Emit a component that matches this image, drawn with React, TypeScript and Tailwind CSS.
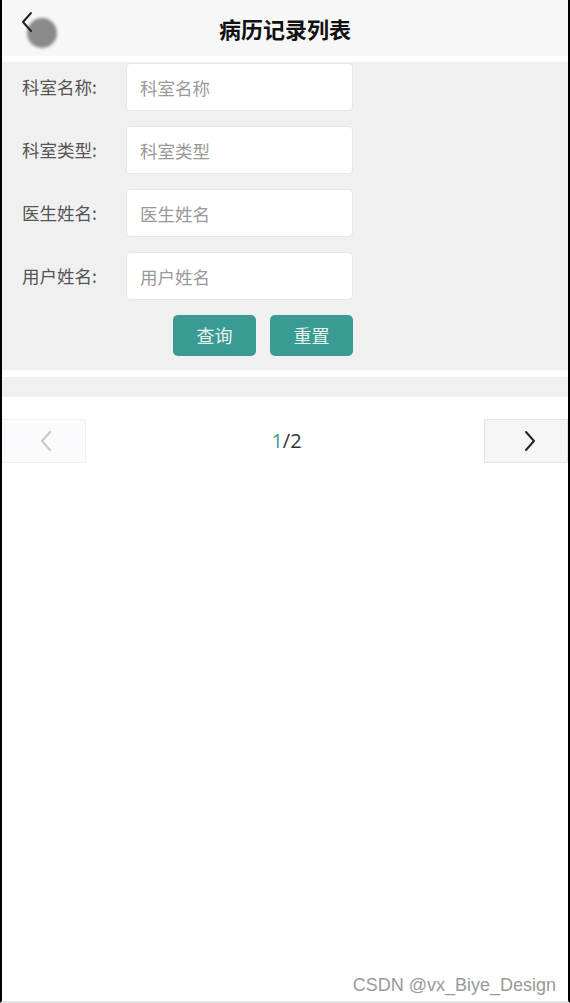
import { useState } from 'react';

const fields = [
  { label: '科室名称:', placeholder: '科室名称' },
  { label: '科室类型:', placeholder: '科室类型' },
  { label: '医生姓名:', placeholder: '医生姓名' },
  { label: '用户姓名:', placeholder: '用户姓名' },
];

function Chevron({ dir, className }: { dir: 'left' | 'right'; className?: string }) {
  return (
    <svg width="14" height="22" viewBox="0 0 14 22" fill="none" className={className}>
      <path
        d={dir === 'left' ? 'M11 2 L3 11 L11 20' : 'M3 2 L11 11 L3 20'}
        stroke="currentColor"
        strokeWidth="2"
        strokeLinecap="round"
        strokeLinejoin="round"
      />
    </svg>
  );
}

export default function App() {
  const [values, setValues] = useState<string[]>(['', '', '', '']);

  return (
    <div
      className="flex h-[1003px] w-[570px] flex-col overflow-hidden border-x-2 border-b-2 border-x-black border-b-[#e4e4e4] bg-white"
      style={{ fontFamily: '"Noto Sans CJK SC", "Noto Sans", sans-serif' }}
    >
      <header className="relative flex h-[56px] shrink-0 items-center justify-center bg-[#f7f7f7]">
        <button className="absolute left-[16px] top-[8px] h-[44px] w-[44px]">
          <span className="absolute left-[9px] top-[10px] h-[30px] w-[30px] rounded-full bg-[#8a8a8a] blur-[1.5px]" />
          <Chevron dir="left" className="absolute left-[2px] top-[3px] text-[#222]" />
        </button>
        <h1 className="text-[22px] font-bold text-[#111]">病历记录列表</h1>
      </header>

      <section className="mt-[6px] flex flex-col gap-[15px] bg-[#f0f0f0] pt-[1px] pb-[14px]">
        {fields.map((f, i) => (
          <div key={f.label} className="flex items-center">
            <label className="w-[124px] pl-[20px] text-[17.5px] text-[#555]">{f.label}</label>
            <input
              value={values[i]}
              onChange={(e) => setValues(values.map((v, j) => (j === i ? e.target.value : v)))}
              placeholder={f.placeholder}
              className="h-[48px] w-[227px] rounded-[4px] border border-[#e6e6e6] bg-white px-[13px] text-[17.5px] text-[#333] outline-none placeholder:text-[#999]"
            />
          </div>
        ))}
        <div className="flex gap-[14px] pl-[171px]">
          <button className="h-[41px] w-[83px] rounded-[5px] bg-[#3a9a94] text-[18px] text-[#e8f2ee]">查询</button>
          <button className="h-[41px] w-[83px] rounded-[5px] bg-[#3a9a94] text-[18px] text-[#e8f2ee]">重置</button>
        </div>
      </section>

      <div className="mt-[7px] h-[20px] shrink-0 bg-[#f0f0f0]" />

      <nav className="mt-[22px] flex h-[44px] items-center justify-between">
        <button className="-ml-[2px] flex h-[44px] w-[86px] items-center justify-center border border-[#f0f0f0] bg-[#fbfafc] text-[#c8c8c8]">
          <Chevron dir="left" className="ml-[6px]" />
        </button>
        <span className="pl-[3px] text-[20px] text-[#333]" style={{ fontFamily: '"Open Sans", sans-serif' }}>
          <span className="text-[#3a9a94]">1</span>/2
        </span>
        <button className="flex h-[44px] w-[84px] items-center justify-center border border-[#e4e4e4] bg-[#f5f5f5] text-[#222]">
          <Chevron dir="right" className="ml-[8px]" />
        </button>
      </nav>

      <div className="mt-auto flex justify-end pb-[2px] pr-[12px]">
        <span className="text-[18px] text-[#999]" style={{ fontFamily: '"Liberation Sans", sans-serif' }}>
          CSDN @vx_Biye_Design
        </span>
      </div>
    </div>
  );
}
